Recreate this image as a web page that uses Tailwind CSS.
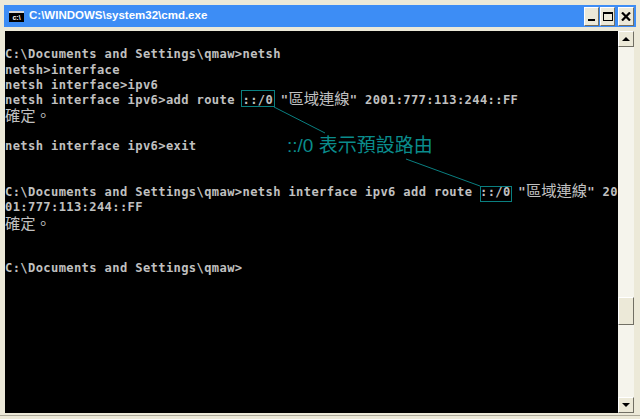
<!DOCTYPE html>
<html lang="zh-TW">
  <head>
    <meta charset="UTF-8" />
    <title>cmd.exe</title>
    <script src="https://cdn.jsdelivr.net/npm/@tailwindcss/browser@4"></script>
  </head>
  <body class="bg-white overflow-hidden">
    <!-- Window -->
    <div class="relative w-[640px] h-[419px] flex flex-col bg-[#ece9d8] overflow-hidden">
      <!-- Title bar -->
      <div class="mt-[5px] mx-[4px] h-[22px] shrink-0 bg-[#3d8df5] flex items-center">
        <div class="ml-[5px] w-[15px] h-[11px] bg-black border-t-2 border-[#d8d8d8] flex items-center justify-center">
          <span class="text-white text-[7px] leading-none font-bold [font-family:'Liberation_Sans',sans-serif]">c:\</span>
        </div>
        <span class="ml-[5px] text-white text-[11.5px] font-bold leading-none [font-family:'Liberation_Sans',sans-serif]">C:\WINDOWS\system32\cmd.exe</span>
        <div class="ml-auto flex items-center mr-[2px]">
          <button class="w-[15px] h-[19px] bg-[#ece9d8] border border-t-white border-l-white border-r-[#716f64] border-b-[#716f64] flex items-end justify-center pb-[4px]">
            <span class="block w-[7px] h-[2px] bg-black"></span>
          </button>
          <button class="ml-[1px] w-[15px] h-[19px] bg-[#ece9d8] border border-t-white border-l-white border-r-[#716f64] border-b-[#716f64] flex items-center justify-center">
            <span class="block w-[10px] h-[9px] border border-black border-t-2"></span>
          </button>
          <button class="ml-[3px] w-[16px] h-[19px] bg-[#ece9d8] border border-t-white border-l-white border-r-[#716f64] border-b-[#716f64] flex items-center justify-center">
            <svg width="10" height="9" viewBox="0 0 10 9"><path d="M1 0.5 L9 8.5 M9 0.5 L1 8.5" stroke="#000" stroke-width="2.2" fill="none" /></svg>
          </button>
        </div>
      </div>

      <!-- Body -->
      <div class="mt-[4px] ml-[5px] mr-[6px] h-[382px] shrink-0 flex">
        <!-- Console -->
        <div class="w-[613px] h-full bg-black text-[#c0c0c0] pt-[1px] text-[12.1px] font-bold tracking-[0.38px] [font-family:'DejaVu_Sans_Mono','Noto_Sans_CJK_TC',monospace]">
          <div class="h-[15.3px] leading-[15.3px] whitespace-pre"> </div>
          <div class="h-[15.3px] leading-[15.3px] whitespace-pre">C:\Documents and Settings\qmaw&gt;netsh</div>
          <div class="h-[15.3px] leading-[15.3px] whitespace-pre">netsh&gt;interface</div>
          <div class="h-[15.3px] leading-[15.3px] whitespace-pre">netsh interface&gt;ipv6</div>
          <div class="h-[15.3px] leading-[15.3px] whitespace-pre">netsh interface ipv6&gt;add route ::/0 "<span class="text-[15.3px] leading-[0] font-normal tracking-normal [font-family:'Noto_Sans_CJK_TC',sans-serif]">區域連線</span>" 2001:777:113:244::FF</div>
          <div class="h-[15.3px] leading-[13px] whitespace-pre text-[15.3px] font-normal tracking-normal [font-family:'Noto_Sans_CJK_TC',sans-serif]">確定。</div>
          <div class="h-[15.3px] leading-[15.3px] whitespace-pre"> </div>
          <div class="h-[15.3px] leading-[15.3px] whitespace-pre">netsh interface ipv6&gt;exit</div>
          <div class="h-[15.3px] leading-[15.3px] whitespace-pre"> </div>
          <div class="h-[15.3px] leading-[15.3px] whitespace-pre"> </div>
          <div class="h-[15.3px] leading-[15.3px] whitespace-pre">C:\Documents and Settings\qmaw&gt;netsh interface ipv6 add route ::/0 "<span class="text-[15.3px] leading-[0] font-normal tracking-normal [font-family:'Noto_Sans_CJK_TC',sans-serif]">區域連線</span>" 20</div>
          <div class="h-[15.3px] leading-[15.3px] whitespace-pre">01:777:113:244::FF</div>
          <div class="h-[15.3px] leading-[13px] whitespace-pre text-[15.3px] font-normal tracking-normal [font-family:'Noto_Sans_CJK_TC',sans-serif]">確定。</div>
          <div class="h-[15.3px] leading-[15.3px] whitespace-pre"> </div>
          <div class="h-[15.3px] leading-[15.3px] whitespace-pre"> </div>
          <div class="h-[15.3px] leading-[15.3px] whitespace-pre">C:\Documents and Settings\qmaw&gt;</div>
        </div>
        <!-- Scrollbar -->
        <div class="w-[16px] h-full bg-[#f5f4ec] flex flex-col">
          <button class="w-[16px] h-[16px] shrink-0 bg-[#ece9d8] border border-t-white border-l-white border-r-[#716f64] border-b-[#716f64] flex items-center justify-center">
            <svg width="8" height="4" viewBox="0 0 8 4"><path d="M4 0 L8 4 L0 4 Z" fill="#000" /></svg>
          </button>
          <div class="flex-1 flex flex-col">
            <div class="mt-[250px] w-[16px] h-[28px] bg-[#ece9d8] border border-t-white border-l-white border-r-[#716f64] border-b-[#716f64]"></div>
          </div>
          <button class="w-[16px] h-[16px] shrink-0 bg-[#ece9d8] border border-t-white border-l-white border-r-[#716f64] border-b-[#716f64] flex items-center justify-center">
            <svg width="8" height="4" viewBox="0 0 8 4"><path d="M0 0 L8 0 L4 4 Z" fill="#000" /></svg>
          </button>
        </div>
      </div>
      <div class="mt-[2px] h-[1px] bg-[#aca899]"></div>

      <!-- Annotation overlay -->
      <svg class="absolute inset-0 pointer-events-none" width="640" height="419" viewBox="0 0 640 419">
        <rect x="241.5" y="90.5" width="33" height="16" fill="none" stroke="#0a7f80" />
        <rect x="480.5" y="186.5" width="31" height="15" fill="none" stroke="#0a7f80" />
        <path d="M274 107 L325 133 M406 159 L480 186" stroke="#0a7f80" fill="none" />
      </svg>
      <div class="absolute left-[287px] top-[135px] text-[#0a8c8c] text-[19px] leading-[22px] whitespace-pre [font-family:'Liberation_Sans','Noto_Sans_CJK_TC',sans-serif]">::/0 表示預設路由</div>
    </div>
  </body>
</html>
